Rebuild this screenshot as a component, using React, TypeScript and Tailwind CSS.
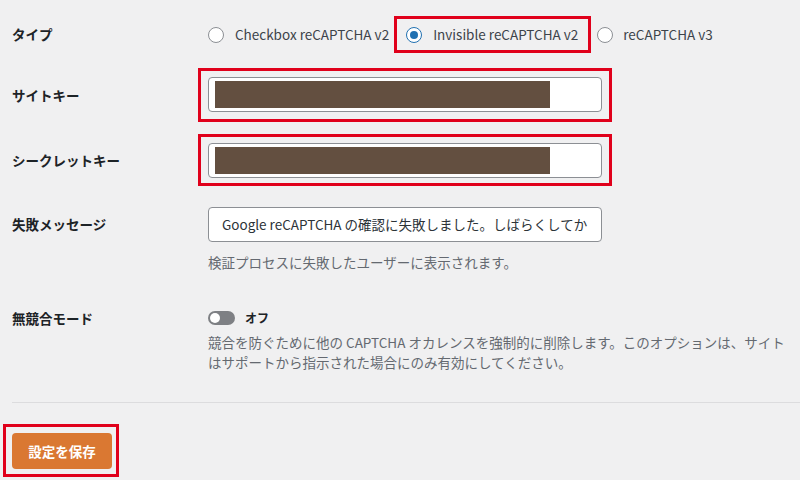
import type { ReactElement } from "react";

const font = { fontFamily: '"Noto Sans CJK JP", "Noto Sans", sans-serif' };

function Radio({ checked }: { checked?: boolean }): ReactElement {
  return (
    <span
      className={
        checked
          ? "flex h-4 w-4 shrink-0 items-center justify-center rounded-full border border-[#2271b1] bg-white"
          : "flex h-4 w-4 shrink-0 items-center justify-center rounded-full border border-[#8c8f94] bg-white"
      }
    >
      {checked && <span className="h-2 w-2 rounded-full bg-[#2271b1]" />}
    </span>
  );
}

function RedBox({ children, className }: { children: React.ReactNode; className?: string }): ReactElement {
  return <div className={"border-[3px] border-[#e0001b] " + (className ?? "")}>{children}</div>;
}

function MaskedInput(): ReactElement {
  return (
    <div className="flex h-[35px] w-[394px] items-center rounded-[4px] border border-[#8c8f94] bg-white pl-[6px]">
      <div className="h-[27px] w-[335px] bg-[#634f40]" />
    </div>
  );
}

export default function App(): ReactElement {
  return (
    <div
      className="h-[480px] w-[800px] overflow-hidden bg-[#f0f0f1] pl-[12px] text-[13.5px] text-[#1d2327]"
      style={font}
    >
      {/* タイプ */}
      <div className="mt-[16px] flex h-[37px] items-center">
        <div className="w-[196px] shrink-0 font-bold">タイプ</div>
        <div className="flex items-center text-[#3c434a]">
          <label className="flex items-center gap-[11px]">
            <Radio />
            <span>Checkbox reCAPTCHA v2</span>
          </label>
          <RedBox className="ml-[5px] flex h-[37px] items-center gap-[11px] pl-[9px] pr-[10px]">
            <Radio checked />
            <span>Invisible reCAPTCHA v2</span>
          </RedBox>
          <label className="ml-[6px] flex items-center gap-[10px]">
            <Radio />
            <span>reCAPTCHA v3</span>
          </label>
        </div>
      </div>

      {/* サイトキー */}
      <div className="mt-[15px] flex h-[54px] items-center">
        <div className="w-[196px] shrink-0 font-bold">サイトキー</div>
        <RedBox className="-ml-[10px] px-[7px] pt-[6px] pb-[7px]">
          <MaskedInput />
        </RedBox>
      </div>

      {/* シークレットキー */}
      <div className="mt-[12px] flex h-[52px] items-center">
        <div className="w-[196px] shrink-0 font-bold">シークレットキー</div>
        <RedBox className="-ml-[10px] px-[7px] pt-[6px] pb-[5px]">
          <MaskedInput />
        </RedBox>
      </div>

      {/* 失敗メッセージ */}
      <div className="mt-[21px] flex">
        <div className="flex h-[35px] w-[196px] shrink-0 items-center font-bold">失敗メッセージ</div>
        <div>
          <div className="flex h-[35px] w-[394px] items-center overflow-hidden whitespace-nowrap rounded-[4px] border border-[#8c8f94] bg-white pl-[13px] text-[#2c3338]">
            Google reCAPTCHA の確認に失敗しました。しばらくしてか
          </div>
          <p className="mt-[10px] leading-[20px] text-[#646970]">検証プロセスに失敗したユーザーに表示されます。</p>
        </div>
      </div>

      {/* 無競合モード */}
      <div className="mt-[36px] flex">
        <div className="flex h-[20px] w-[196px] shrink-0 items-center font-bold">無競合モード</div>
        <div className="min-w-0">
          <div className="flex h-[20px] items-center gap-[10px]">
            <span className="flex h-[14px] w-[27px] items-center rounded-full bg-[#7e8084] pl-[2px]">
              <span className="h-[10px] w-[10px] rounded-full bg-white" />
            </span>
            <span className="text-[12px] font-bold">オフ</span>
          </div>
          <div className="mt-[4px] whitespace-nowrap leading-[20px] text-[#646970]">
            <p>競合を防ぐために他の CAPTCHA オカレンスを強制的に削除します。このオプションは、サイト</p>
            <p>はサポートから指示された場合にのみ有効にしてください。</p>
          </div>
        </div>
      </div>

      <div className="mt-[30px] h-px bg-[#dcdcde]" />

      {/* 保存 */}
      <RedBox className="-ml-[9px] mt-[21px] w-[116px] px-[6px] pt-[6px] pb-[5px]">
        <button className="flex h-[36px] w-[100px] items-center justify-center rounded-[4px] bg-[#da7832] font-bold text-white">
          設定を保存
        </button>
      </RedBox>
    </div>
  );
}
